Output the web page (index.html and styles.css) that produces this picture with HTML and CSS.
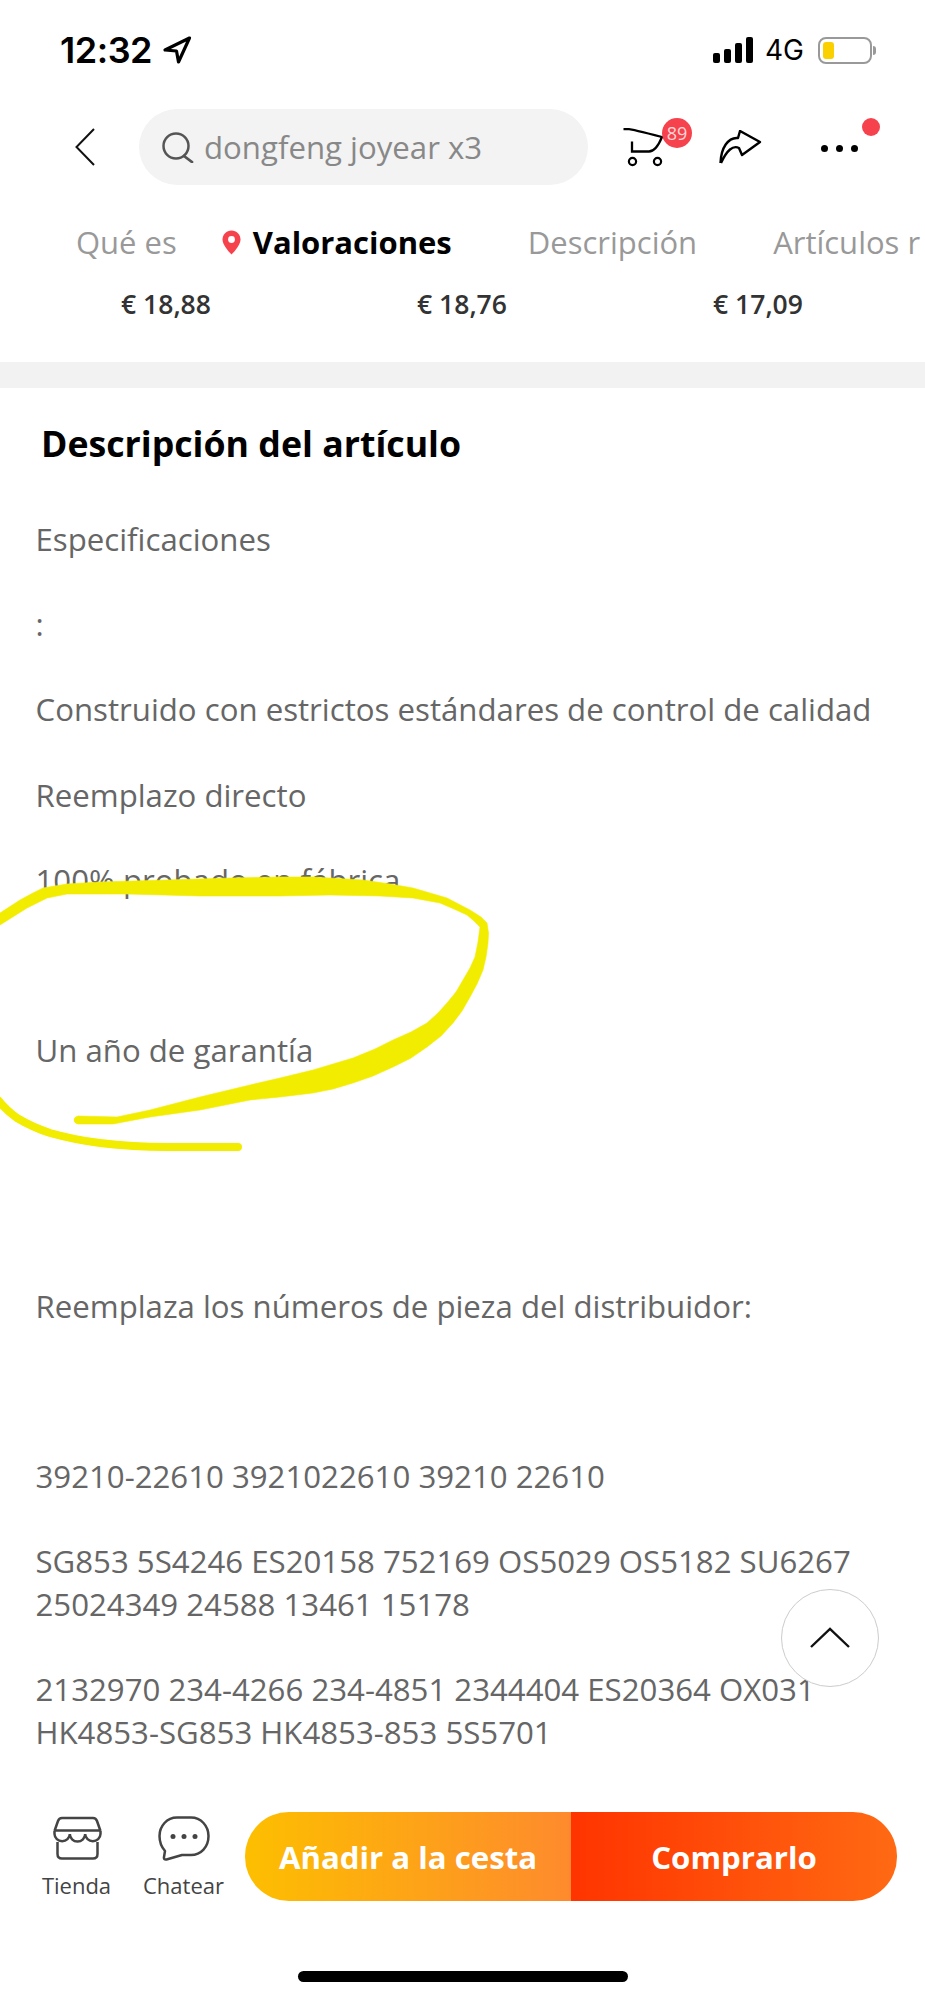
FILE: index.html
```html
<!DOCTYPE html>
<html lang="es">
<head>
  <meta charset="UTF-8">
  <meta name="viewport" content="width=device-width, initial-scale=1.0">
  <title>Descripción del artículo</title>
  <link rel="stylesheet" href="styles.css">
</head>
<body>
  <div class="page">
    <div class="status_bar">
      <div class="status_left">
        <span class="time">12:32</span>
        <svg class="icon_location" width="30" height="28" viewBox="0 0 30 28">
          <path d="M27.5 2 L3 14 L14.5 15 L16.5 26 Z" fill="none" stroke="#000" stroke-width="3.2" stroke-linejoin="round"/>
        </svg>
      </div>
      <div class="status_right">
        <div class="signal">
          <span class="bar1"></span>
          <span class="bar2"></span>
          <span class="bar3"></span>
          <span class="bar4"></span>
        </div>
        <span class="network">4G</span>
        <div class="battery"><span class="battery_level"></span></div>
        <span class="battery_nub"></span>
      </div>
    </div>

    <div class="nav">
      <svg class="icon_back" width="20" height="38" viewBox="0 0 20 38">
        <path d="M19 1 L1.5 19 L19 37" fill="none" stroke="#111" stroke-width="2"/>
      </svg>
      <div class="search">
        <svg width="32" height="31" viewBox="0 0 32 31">
          <circle cx="14" cy="14" r="12.5" fill="none" stroke="#555" stroke-width="2.5"/>
          <path d="M22 24 L30 30" fill="none" stroke="#555" stroke-width="2.8" stroke-linecap="round"/>
        </svg>
        <span>dongfeng joyear x3</span>
      </div>
      <div class="cart">
        <svg width="41" height="39" viewBox="0 0 41 39">
          <path d="M0.5 1.2 H6 Q8 1.2 39 9 Q33 23.5 26 23.5 H9 V13.5" fill="none" stroke="#000" stroke-width="2.3"/>
          <circle cx="9.5" cy="33.5" r="3.6" fill="none" stroke="#000" stroke-width="2.2"/>
          <circle cx="34.5" cy="33.5" r="3.6" fill="none" stroke="#000" stroke-width="2.2"/>
        </svg>
        <span class="badge">89</span>
      </div>
      <svg class="icon_share" width="44" height="34" viewBox="0 0 44 34">
        <path d="M1.5 33 C2 18 9 7 19 8 L21 1 L41 12 L23 25 L20 18 C14 15 8 20 2 33" fill="none" stroke="#000" stroke-width="2.4" stroke-linejoin="round"/>
      </svg>
      <div class="more">
        <span></span><span></span><span></span>
        <i class="more_dot"></i>
      </div>
    </div>

    <div class="tabs">
      <span class="tab tab_first">Qué es</span>
      <span class="tab tab_active">
        <svg width="19" height="25" viewBox="0 0 19 25">
          <path d="M9.5 0.5 C14.5 0.5 18.5 4.5 18.5 9.5 C18.5 14.5 13 21 9.5 24.5 C6 21 0.5 14.5 0.5 9.5 C0.5 4.5 4.5 0.5 9.5 0.5 Z" fill="#f5424d"/>
          <circle cx="9.5" cy="9.5" r="3.4" fill="#fff"/>
        </svg>
        Valoraciones
      </span>
      <span class="tab tab_third">Descripción</span>
      <span class="tab tab_last">Artículos r</span>
    </div>

    <div class="prices">
      <span>€ 18,88</span>
      <span>€ 18,76</span>
      <span>€ 17,09</span>
    </div>

    <div class="band"></div>

    <div class="content">
      <h2 class="title">Descripción del artículo</h2>
      <div class="desc">
        <p>Especificaciones</p>
        <p>:</p>
        <p>Construido con estrictos estándares de control de calidad</p>
        <p>Reemplazo directo</p>
        <p>100% probado en fábrica</p>
        <p>&nbsp;</p>
        <p>Un año de garantía</p>
        <p>&nbsp;</p>
        <p>&nbsp;</p>
        <p>Reemplaza los números de pieza del distribuidor:</p>
        <p>&nbsp;</p>
        <p>39210-22610 3921022610 39210 22610</p>
        <p>SG853 5S4246 ES20158 752169 OS5029 OS5182 SU6267 25024349 24588 13461 15178</p>
        <p>2132970 234-4266 234-4851 2344404 ES20364 OX031 HK4853-SG853 HK4853-853 5S5701</p>
      </div>
    </div>

    <div class="footer">
      <div class="actions">
        <div class="action">
          <svg class="icon_store" width="49" height="45" viewBox="0 0 49 45">
            <path d="M1.5 15 L5 5 Q6 2 9 2 H40 Q43 2 44 5 L47.5 15 M1.5 14.5 H47.5 M1.5 15 V18 A7.67 7.5 0 0 0 16.83 18 A7.67 7.5 0 0 0 32.17 18 A7.67 7.5 0 0 0 47.5 18 V15 M4.5 26 V38 Q4.5 42.5 9 42.5 H40 Q44.5 42.5 44.5 38 V26" fill="none" stroke="#444" stroke-width="2.5"/>
          </svg>
          <span>Tienda</span>
        </div>
        <div class="action">
          <svg width="52" height="45" viewBox="0 0 52 45">
            <path d="M19 1.5 H33 C43 1.5 50.5 10 50.5 20 C50.5 31 43 39 33 39 H24 L8.5 43.5 Q5.5 44 6 41 L7 35 C3.5 31 1.5 26 1.5 20 C1.5 10 9 1.5 19 1.5 Z" fill="none" stroke="#444" stroke-width="2.5" stroke-linejoin="round"/>
            <circle cx="15" cy="20.5" r="2.5" fill="#444"/>
            <circle cx="26" cy="20.5" r="2.5" fill="#444"/>
            <circle cx="37" cy="20.5" r="2.5" fill="#444"/>
          </svg>
          <span>Chatear</span>
        </div>
        <div class="buy_btns">
          <span class="btn_cart">Añadir a la cesta</span>
          <span class="btn_buy">Comprarlo</span>
        </div>
      </div>
      <div class="home_bar"></div>
    </div>

    <!-- back to top, floats over the text -->
    <div class="to_top">
      <svg width="42" height="22" viewBox="0 0 42 22">
        <path d="M2 20 L21 2 L40 20" fill="none" stroke="#111" stroke-width="2.4"/>
      </svg>
    </div>

    <!-- yellow marker drawn on the screenshot -->
    <svg class="marker" width="925" height="2000" viewBox="0 0 925 2000">
      <path d="M0 913 L20 900 L33 893 L43 888 L67 884 L100 882 L167 880 L230 878 L280 877 L313 877 L363 880 L390 884 L413 888 L447 898 L470 910 L481 917 L487 923 L488.5 933 L488 943 L486 957 L483 970 L477 984 L470 997 L462 1011 L453 1023 L441 1036 L427 1047 L411 1058 L393 1067 L373 1076 L353 1083 L333 1089 L313 1093 L280 1097 L250 1100 L200 1110 L150 1117 L113 1124 L78 1124 Q74 1123 74 1120 Q74 1117 78 1116 L117 1117 L150 1110 L200 1097 L250 1085 L280 1078 L313 1070 L353 1058 L375 1049 L393 1040 L411 1032 L427 1023 L438 1013 L447 1003 L456 992 L463 980 L470 968 L475 957 L478 942 L480 927 L474 921 L467 915 L454 909 L440 903 L413 898 L380 896 L330 895 L280 896 L200 896 L127 894 L67 894 L47 898 L27 908 L0 925 Z" fill="#f2ec00" stroke="#f2ec00" stroke-width="0.6" stroke-linejoin="round"/>
      <path d="M-2 1100 Q6 1110 17 1118 Q32 1127 50 1133 Q75 1140 100 1143 Q133 1147 167 1147 L238 1147" fill="none" stroke="#f2ec00" stroke-width="8" stroke-linecap="round"/>
    </svg>
  </div>
</body>
</html>
```

FILE: styles.css
```css
* {
  box-sizing: border-box;
}
html, body {
  margin: 0;
  padding: 0;
  background-color: #fff;
}
.page {
  position: relative;
  width: 925px;
  height: 2000px;
  overflow: hidden;
  display: flex;
  flex-direction: column;
  font-family: "Open Sans", "Liberation Sans", sans-serif;
}

/* status bar */
.status_bar {
  height: 100px;
  flex-shrink: 0;
  display: flex;
  align-items: center;
  justify-content: space-between;
  padding: 0 49px 0 60px;
  font-family: Inter, "Liberation Sans", sans-serif;
}
.status_left {
  display: flex;
  align-items: center;
  gap: 10px;
}
.time {
  font-size: 36px;
  font-weight: 600;
  letter-spacing: -0.5px;
  color: #000;
}
.status_right {
  display: flex;
  align-items: center;
}
.signal {
  display: flex;
  align-items: flex-end;
  gap: 4px;
  height: 26px;
}
.signal span {
  display: block;
  width: 7px;
  background-color: #000;
  border-radius: 2px;
}
.bar1 { height: 10px; }
.bar2 { height: 14px; }
.bar3 { height: 20px; }
.bar4 { height: 26px; }
.network {
  margin-left: 12px;
  width: 53px;
  font-size: 28px;
  color: #000;
}
.battery {
  width: 54px;
  height: 27px;
  border: 2px solid #999;
  border-radius: 8px;
  padding: 3px;
}
.battery_level {
  display: block;
  width: 11px;
  height: 100%;
  background-color: #fbd000;
  border-radius: 3px;
}
.battery_nub {
  display: block;
  width: 3px;
  height: 9px;
  margin-left: 1px;
  background-color: #999;
  border-radius: 0 3px 3px 0;
}

/* search row */
.nav {
  height: 76px;
  margin-top: 9px;
  flex-shrink: 0;
  display: flex;
  align-items: center;
  padding-left: 75px;
}
.icon_back {
  flex-shrink: 0;
}
.search {
  width: 449px;
  height: 76px;
  margin-left: 44px;
  padding-left: 23px;
  display: flex;
  align-items: center;
  gap: 10px;
  background-color: #f3f3f3;
  border-radius: 38px;
  font-size: 31.2px;
  color: #888;
}
.cart {
  position: relative;
  width: 41px;
  height: 39px;
  margin-left: 35px;
}
.cart svg {
  display: block;
}
.badge {
  position: absolute;
  left: 39px;
  top: -10px;
  width: 30px;
  height: 30px;
  border-radius: 50%;
  background-color: #f5424d;
  color: #ffd6d6;
  font-size: 18px;
  line-height: 30px;
  text-align: center;
}
.icon_share {
  margin-left: 55px;
}
.more {
  position: relative;
  display: flex;
  gap: 8px;
  margin-left: 58px;
  margin-top: 3px;
}
.more span {
  display: block;
  width: 7px;
  height: 7px;
  background-color: #000;
  border-radius: 50%;
}
.more_dot {
  position: absolute;
  left: 41px;
  top: -27px;
  width: 18px;
  height: 18px;
  background-color: #f5424d;
  border-radius: 50%;
}

/* anchor tabs */
.tabs {
  margin-top: 33px;
  height: 48px;
  flex-shrink: 0;
  display: flex;
  align-items: center;
  white-space: nowrap;
  font-size: 31px;
  line-height: 48px;
  color: #999;
}
.tab_first {
  margin-left: 76px;
}
.tab_active {
  display: flex;
  align-items: center;
  gap: 12px;
  margin-left: 45px;
  font-weight: 700;
  color: #000;
}
.tab_third {
  margin-left: 76px;
}
.tab_last {
  margin-left: 76px;
}

/* prices left over from the section above */
.prices {
  flex-shrink: 0;
  display: grid;
  grid-template-columns: repeat(3, 296px);
  padding: 14px 18px 34px;
  font-size: 26.5px;
  font-weight: 600;
  line-height: 48px;
  text-align: center;
  color: #333;
}
.band {
  height: 26px;
  flex-shrink: 0;
  background-color: #f2f2f2;
}

/* description */
.content {
  flex: 1;
  min-height: 0;
  overflow: hidden;
  padding: 30px 36px 0;
}
.title {
  margin: 0 0 0 5px;
  font-size: 35.7px;
  font-weight: 700;
  line-height: 50px;
  color: #000;
}
.desc {
  margin: 50px 0 0 -0.5px;
  font-size: 31.2px;
  line-height: 42.6px;
  color: #666;
}
.desc p {
  margin: 0 0 42.6px;
}

/* bottom bar */
.footer {
  height: 220px;
  flex-shrink: 0;
  background-color: #fff;
  padding-top: 32px;
}
.actions {
  display: flex;
  padding-left: 23px;
}
.action {
  width: 107px;
  padding-top: 4px;
  display: flex;
  flex-direction: column;
  align-items: center;
  font-size: 22px;
  color: #444;
}
.action span {
  margin-top: 9px;
  line-height: 30px;
}
.icon_store {
  margin-left: 2px;
}
.buy_btns {
  display: flex;
  width: 652px;
  height: 89px;
  margin-left: 8px;
  border-radius: 44px;
  overflow: hidden;
  font-size: 31.2px;
  font-weight: 700;
  color: #fff;
}
.buy_btns span {
  display: flex;
  align-items: center;
  justify-content: center;
}
.btn_cart {
  width: 326px;
  background: linear-gradient(90deg, #fdbf00, #fe8a2d);
}
.btn_buy {
  width: 326px;
  background: linear-gradient(90deg, #ff3400, #ff6a13);
}
.home_bar {
  width: 330px;
  height: 11px;
  margin: 70px auto 0;
  background-color: #000;
  border-radius: 6px;
}

/* overlays */
.to_top {
  position: absolute;
  left: 781px;
  top: 1589px;
  width: 98px;
  height: 98px;
  display: flex;
  align-items: center;
  justify-content: center;
  background-color: #fff;
  border: 1px solid #ccc;
  border-radius: 50%;
}
.marker {
  position: absolute;
  left: 0;
  top: 0;
  pointer-events: none;
}
```
